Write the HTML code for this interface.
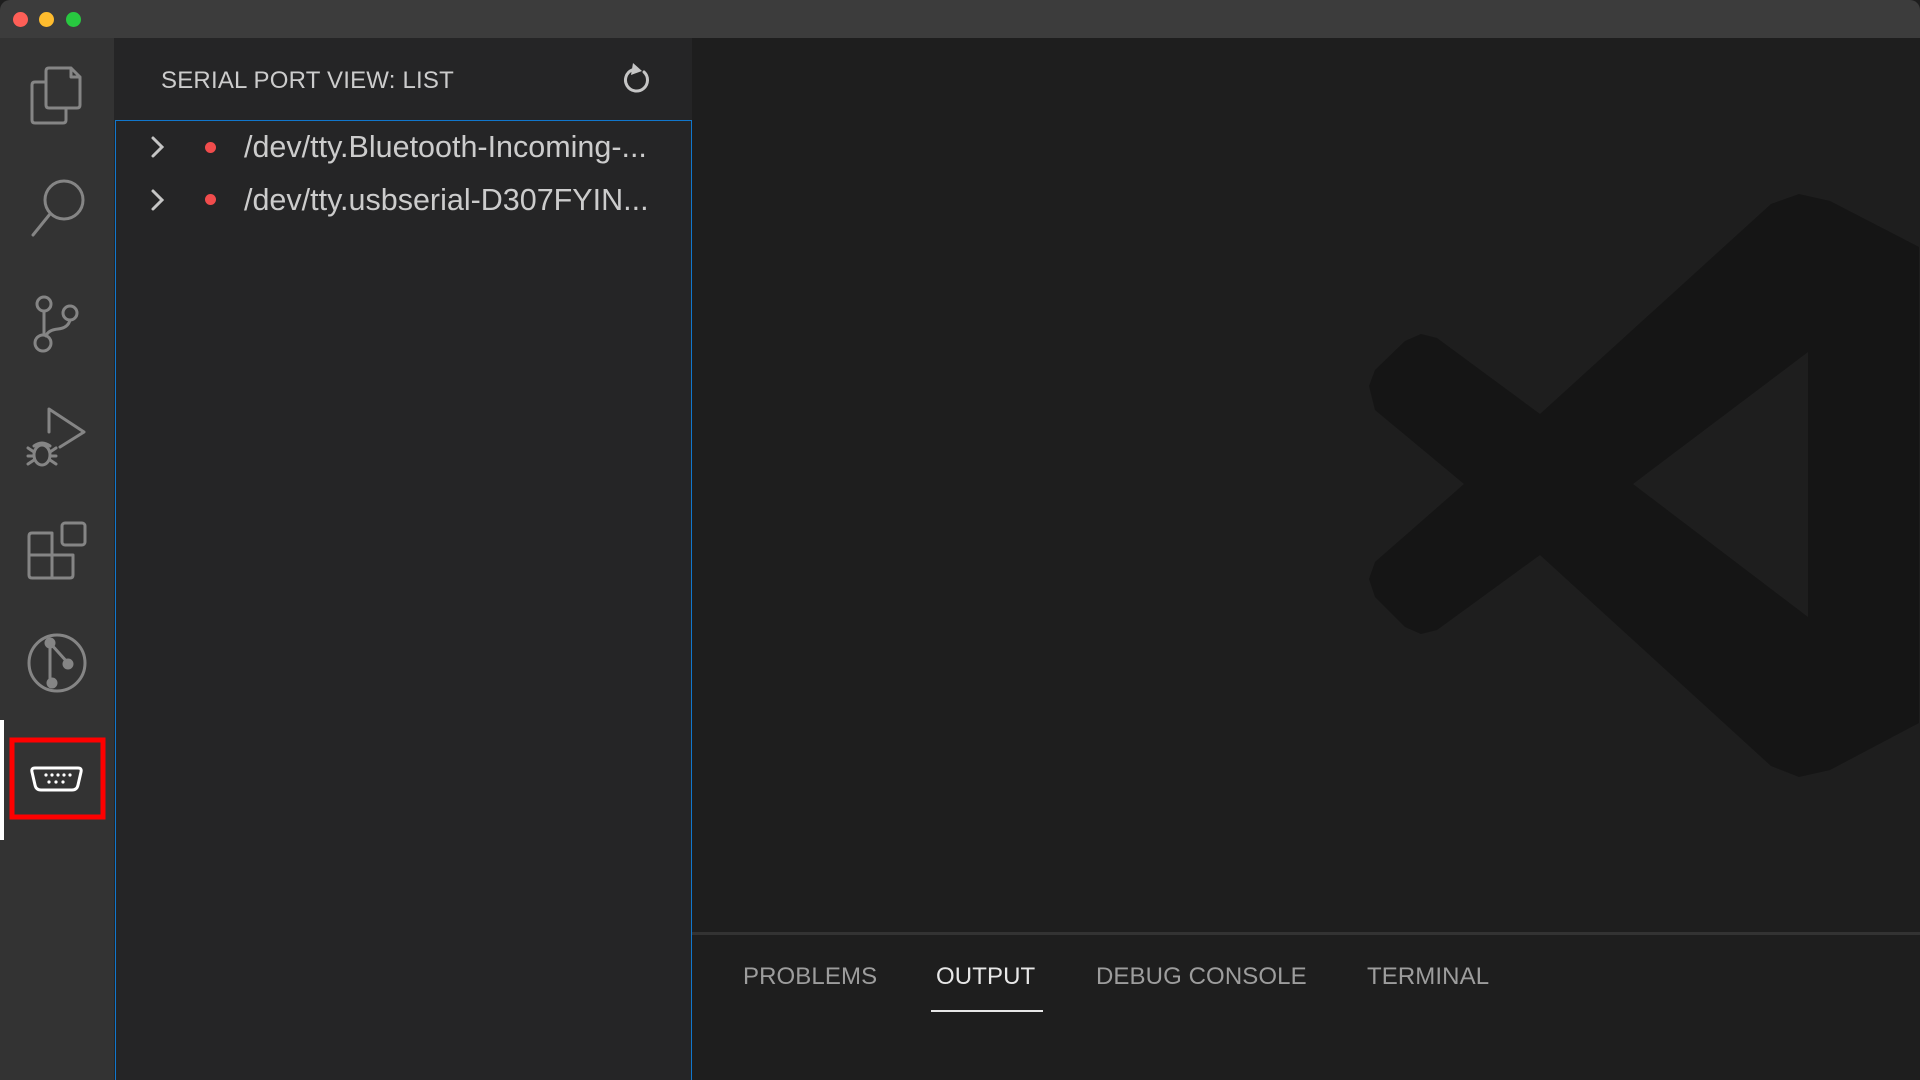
<!DOCTYPE html>
<html><head><meta charset="utf-8"><style>
*{margin:0;padding:0;box-sizing:border-box}
body{width:1920px;height:1080px;overflow:hidden;background:#1e1e1e;font-family:"Liberation Sans",sans-serif;position:relative}
.abs{position:absolute}
#title{left:0;top:0;width:1920px;height:38px;background:#3c3c3c;border-radius:10px 10px 0 0}
#act{left:0;top:38px;width:114px;height:1042px;background:#333333}
#side{left:114px;top:38px;width:578px;height:1042px;background:#252526}
.hdr{left:161px;top:67px;font-size:24px;color:#cccccc;letter-spacing:0.2px}
.list{left:115px;top:120px;width:577px;height:960px;border:1.5px solid #1177cc;border-bottom:none}
.row{font-size:30.5px;color:#cccccc;left:244px}
.dot{width:11px;height:11px;border-radius:50%;background:#f14c4c}
.tab{top:963px;font-size:24px;color:#9d9d9d;letter-spacing:0.1px}
</style></head><body>
<div id="title" class="abs"></div>
<div class="abs" style="left:13px;top:12px;width:15px;height:15px;border-radius:50%;background:#fe5f57"></div>
<div class="abs" style="left:39px;top:12px;width:15px;height:15px;border-radius:50%;background:#febc2e"></div>
<div class="abs" style="left:66px;top:12px;width:15px;height:15px;border-radius:50%;background:#28c840"></div>
<div id="act" class="abs"></div>
<div id="side" class="abs"></div>
<div class="abs" style="left:692px;top:932px;width:1228px;height:3px;background:#333"></div>
<svg class="abs" style="left:0;top:0" width="1920" height="1080">
<path fill="#151515" fill-rule="evenodd" d="M1771,204 L1799,194 L1830,201 L1919,247 L1919,723 L1830,770 L1799,777 L1771,766 L1540,555 L1437,630 L1421,634 L1405,627 L1375,597 L1369,579 L1375,562 L1464,484 L1375,410 L1369,386 L1375,370 L1405,341 L1421,334 L1437,338 L1540,414 Z M1808,352 L1808,617 L1633,484 Z"/>
<g fill="none" stroke="#858585" stroke-width="3" stroke-linecap="round" stroke-linejoin="round">
<path d="M46,82 H35 Q32,82 32,85 V120 Q32,123 35,123 H63 Q66,123 66,120 V108"/>
<path d="M49,68 H71 L80,77 V105 Q80,108 77,108 H49 Q46,108 46,105 V71 Q46,68 49,68 Z M71,68 V77 H80"/>
<circle cx="64" cy="200" r="19"/><path d="M50,214 L33,235"/>
<circle cx="44" cy="304" r="7"/><circle cx="70" cy="313" r="7"/><circle cx="43" cy="343" r="8"/>
<path d="M44,311 V335 M70,320 Q68,328 58,329 Q48,330 46,336"/>
<path d="M49,432 V409 L84,432 L60,447"/>
<ellipse cx="42" cy="455" rx="8" ry="10"/><path d="M34,446 Q42,440 50,446 M28,448 L34,452 M28,456 H34 M28,464 L34,460 M56,448 L50,452 M56,456 H50 M56,464 L50,460"/>
<path d="M29,555 H52 V533 H32 Q29,533 29,536 Z M29,555 V575 Q29,578 32,578 H52 V555 M52,578 H70 Q73,578 73,575 V555 H52"/>
<rect x="62" y="523" width="23" height="22" rx="3"/>
<circle cx="57" cy="663" r="28"/>
</g>
<g stroke="#858585" stroke-width="3" fill="#858585"><path d="M50,643 V682 M50,643 L68,663"/><circle cx="50" cy="643" r="4"/><circle cx="68" cy="664" r="4"/><circle cx="52" cy="683" r="4"/></g>
<rect x="0" y="720" width="4" height="120" fill="#ffffff"/>
<rect x="12" y="740" width="91" height="77" fill="none" stroke="#ff0000" stroke-width="5"/>
<path d="M35,768 H78 Q82,768 81,772 L78,785 Q77,790 72,790 H41 Q36,790 35,785 L32,772 Q31,768 35,768 Z" fill="none" stroke="#ffffff" stroke-width="3"/>
<g fill="#fff"><circle cx="46" cy="775" r="1.6"/><circle cx="52" cy="775" r="1.6"/><circle cx="58" cy="775" r="1.6"/><circle cx="64" cy="775" r="1.6"/><circle cx="70" cy="775" r="1.6"/><circle cx="49" cy="782" r="1.6"/><circle cx="56" cy="782" r="1.6"/><circle cx="63" cy="782" r="1.6"/></g>
<g fill="none" stroke="#c5c5c5" stroke-width="3" stroke-linecap="round"><path d="M153,138 L162,147 L153,156 M153,191 L162,200 L153,209"/>
<path d="M644,72 A11,11 0 1 1 632,70"/></g>
<path d="M633,63 L642,71 L631,75 Z" fill="#c5c5c5"/>
</svg>
<div class="abs hdr">SERIAL PORT VIEW: LIST</div>
<div class="abs list"></div>
<div class="abs dot" style="left:205px;top:142px"></div>
<div class="abs dot" style="left:205px;top:194px"></div>
<div class="abs row" style="top:130px">/dev/tty.Bluetooth-Incoming-...</div>
<div class="abs row" style="top:183px">/dev/tty.usbserial-D307FYIN...</div>
<div class="abs tab" style="left:743px">PROBLEMS</div>
<div class="abs tab" style="left:936px;color:#e7e7e7">OUTPUT</div>
<div class="abs tab" style="left:1096px">DEBUG CONSOLE</div>
<div class="abs tab" style="left:1367px">TERMINAL</div>
<div class="abs" style="left:931px;top:1010px;width:112px;height:2px;background:#e7e7e7"></div>
</body></html>
